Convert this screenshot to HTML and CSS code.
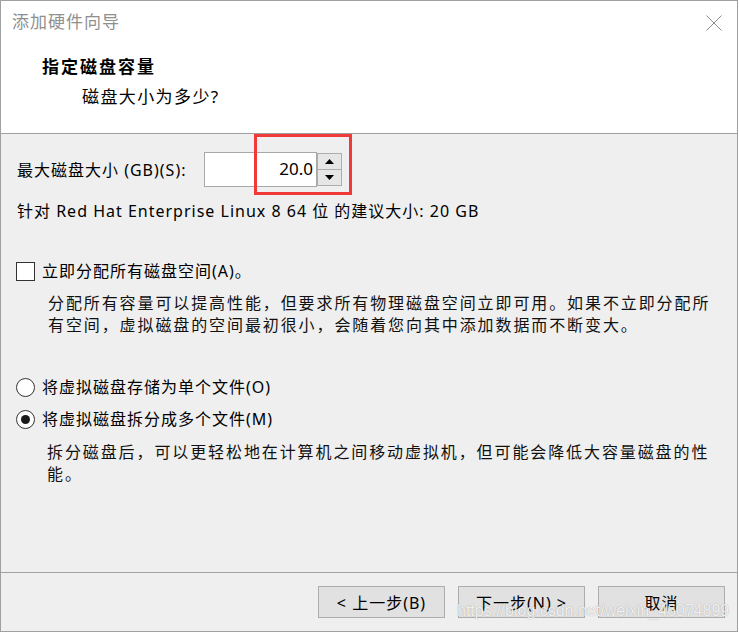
FILE: index.html
```html
<!DOCTYPE html>
<html lang="zh-CN">
<head>
<meta charset="utf-8">
<title>添加硬件向导</title>
<link rel="stylesheet" href="styles.css">
</head>
<body>
<div class="window">
  <div class="titlebar">
    <span class="title">添加硬件向导</span>
    <svg class="close" width="16" height="16" viewBox="0 0 16 16"><path d="M0.5 0.5 L15.5 15.5 M15.5 0.5 L0.5 15.5" stroke="#8a8a8a" stroke-width="1" fill="none"/></svg>
  </div>
  <div class="header">
    <div class="h-title">指定磁盘容量</div>
    <div class="h-sub">磁盘大小为多少?</div>
  </div>
  <div class="content">
    <div class="size-row">
      <span class="size-label cjk">最大磁盘大小 (GB)(S):</span>
      <div class="spin">
        <div class="spin-input">20.0</div>
        <div class="spin-btns">
          <div class="spin-btn"><svg width="9" height="5" viewBox="0 0 9 5"><path d="M4.5 0 L9 5 L0 5 Z" fill="#000"/></svg></div>
          <div class="spin-btn"><svg width="9" height="5" viewBox="0 0 9 5"><path d="M0 0 L9 0 L4.5 5 Z" fill="#000"/></svg></div>
        </div>
      </div>
    </div>
    <div class="recommend cjk">针对 Red Hat Enterprise Linux 8 64 位 的建议大小: 20 GB</div>
    <div class="option check-row">
      <span class="checkbox"></span>
      <span class="opt-text cjk">立即分配所有磁盘空间(A)。</span>
    </div>
    <p class="desc desc-a">分配所有容量可以提高性能，但要求所有物理磁盘空间立即可用。如果不立即分配所<br>有空间，虚拟磁盘的空间最初很小，会随着您向其中添加数据而不断变大。</p>
    <div class="option radio-row">
      <span class="radio"></span>
      <span class="opt-text cjk">将虚拟磁盘存储为单个文件(O)</span>
    </div>
    <div class="option radio-row second">
      <span class="radio checked"><span class="dot"></span></span>
      <span class="opt-text cjk">将虚拟磁盘拆分成多个文件(M)</span>
    </div>
    <p class="desc desc-b">拆分磁盘后，可以更轻松地在计算机之间移动虚拟机，但可能会降低大容量磁盘的性<br>能。</p>
  </div>
  <div class="footer">
    <button class="btn">&lt; 上一步(B)</button>
    <button class="btn">下一步(N) &gt;</button>
    <button class="btn">取消</button>
  </div>
  <div class="highlight"></div>
  <div class="watermark">https://blog.csdn.net/weixin_46074899</div>
</div>
</body>
</html>
```
FILE: styles.css
```css
* { box-sizing: border-box; }
html, body { margin: 0; padding: 0; background: #ffffff; }
body {
  font-family: "Noto Sans", "Noto Sans CJK SC", sans-serif;
  font-size: 16px;
  color: #000;
}
.window {
  position: relative;
  width: 738px;
  height: 632px;
  border: 1px solid #a0a0a0;
  background: #efefef;
  display: flex;
  flex-direction: column;
}
.titlebar {
  height: 42px;
  background: #fff;
  display: flex;
  align-items: center;
  justify-content: space-between;
  padding: 0 15px 0 11px;
}
.title {
  font-size: 17px;
  letter-spacing: 1px;
  color: #8f8f8f;
  line-height: 22px;
}
.close { display: block; margin-top: 2px; }
.header {
  height: 91px;
  background: #fff;
  border-bottom: 1px solid #a0a0a0;
  padding: 12px 0 0 41px;
}
.h-title {
  font-weight: 700;
  font-size: 17px;
  letter-spacing: 2px;
  line-height: 24px;
}
.h-sub {
  margin-top: 6px;
  padding-left: 40px;
  font-size: 17px;
  letter-spacing: 1.4px;
  line-height: 24px;
}
.content {
  height: 439px;
  border-bottom: 1px solid #a0a0a0;
  padding: 18px 0 0 16px;
}
.cjk { letter-spacing: 1px; }
.size-row {
  display: flex;
  align-items: center;
  height: 35px;
}
.size-label {
  width: 187px;
  flex: none;
  line-height: 22px;
  white-space: nowrap;
}
.spin { display: flex; }
.spin-input {
  width: 113px;
  height: 35px;
  background: #fff;
  border: 1px solid #a8a8a8;
  text-align: right;
  padding-right: 3px;
  font-size: 17px;
  line-height: 31px;
}
.spin-btns {
  display: flex;
  flex-direction: column;
  padding-top: 1px;
}
.spin-btn {
  width: 25px;
  height: 17px;
  background: #e6e6e6;
  border: 1px solid #adadad;
  display: flex;
  align-items: center;
  justify-content: center;
}
.spin-btn + .spin-btn { margin-top: -1px; }
.spin-btn svg { display: block; }
.recommend {
  margin-top: 13px;
  line-height: 22px;
  white-space: nowrap;
}
.option {
  display: flex;
  align-items: center;
  height: 22px;
}
.check-row { margin-top: 38px; }
.checkbox {
  width: 19px;
  height: 19px;
  margin-left: -1px;
  border: 1px solid #333;
  background: #fff;
  flex: none;
}
.opt-text {
  margin-left: 7px;
  line-height: 22px;
  white-space: nowrap;
}
.desc {
  margin: 10px 0 0 31px;
  line-height: 22px;
  letter-spacing: 1.9px;
  white-space: nowrap;
  color: #111;
}
.desc-b { margin-top: 11px; margin-left: 30px; }
.radio-row { margin-top: 40px; }
.radio-row.second { margin-top: 10px; }
.radio {
  width: 19px;
  height: 19px;
  margin-left: -1px;
  border: 1px solid #333;
  border-radius: 50%;
  background: #fff;
  flex: none;
  display: flex;
  align-items: center;
  justify-content: center;
}
.dot {
  width: 9px;
  height: 9px;
  border-radius: 50%;
  background: #1a1a1a;
}
.footer {
  flex: 1;
  display: flex;
  justify-content: flex-end;
  align-items: flex-start;
  gap: 13px;
  padding: 13px 12px 0 0;
}
.btn {
  width: 127px;
  height: 32px;
  background: #e1e1e1;
  border: 1px solid #adadad;
  font-family: "Noto Sans", "Noto Sans CJK SC", sans-serif;
  font-size: 16px;
  letter-spacing: 1px;
  color: #000;
  padding: 0;
  margin: 0;
}
.highlight {
  position: absolute;
  left: 253px;
  top: 133px;
  width: 98px;
  height: 61px;
  border: 3px solid #f03a3a;
}
.watermark {
  position: absolute;
  left: 456px;
  top: 601px;
  font-family: "Liberation Sans", sans-serif;
  font-size: 16px;
  color: rgba(255,255,255,0.85);
  text-shadow: 0 0 1px rgba(120,120,120,0.7);
  white-space: nowrap;
}
```
